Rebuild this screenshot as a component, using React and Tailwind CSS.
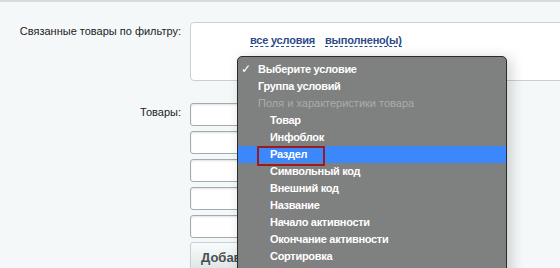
import React from "react";

const items = [
  { t: "Выберите условие", level: 0, check: true },
  { t: "Группа условий", level: 0 },
  { t: "Поля и характеристики товара", level: 0, disabled: true },
  { t: "Товар", level: 1 },
  { t: "Инфоблок", level: 1 },
  { t: "Раздел", level: 1, active: true },
  { t: "Символьный код", level: 1 },
  { t: "Внешний код", level: 1 },
  { t: "Название", level: 1 },
  { t: "Начало активности", level: 1 },
  { t: "Окончание активности", level: 1 },
  { t: "Сортировка", level: 1 },
];

export default function App() {
  return (
    <div
      className="relative h-[268px] w-[560px] overflow-hidden border-t-2 border-[#d3dce1] bg-[#f4f8f9] text-[11px] text-[#222]"
      style={{ fontFamily: '"Liberation Sans", Arial, sans-serif' }}
    >
      {/* Row 1 */}
      <div className="flex pt-[20px]">
        <div className="w-[181px] shrink-0 pt-[2px] text-right text-[11px] leading-[15px]">
          Связанные товары по фильтру:
        </div>
        <div className="ml-[9px] h-[59px] w-[420px] shrink-0 rounded-[4px] border border-[#c8d0d5] bg-white pl-[59px] pt-[9px]">
          <span className="border-b border-dashed border-[#2d4b87] text-[11px] font-bold leading-[15px] tracking-[-0.2px] text-[#2d4b87]">
            все условия
          </span>
          <span className="ml-[10px] border-b border-dashed border-[#2d4b87] text-[11px] font-bold leading-[15px] tracking-[-0.2px] text-[#2d4b87]">
            выполнено(ы)
          </span>
        </div>
      </div>

      {/* Row 2 */}
      <div className="mt-[22px] flex">
        <div className="w-[181px] shrink-0 pt-[2px] text-right text-[11px] leading-[15px]">Товары:</div>
        <div className="ml-[9px] flex flex-col gap-[5px]">
          {[0, 1, 2, 3, 4].map((i) => (
            <div
              key={i}
              className="h-[23px] w-[110px] rounded-[3px] border border-[#a3abb0] bg-white shadow-[inset_0_1px_2px_rgba(0,0,0,0.12)]"
            />
          ))}
          <div className="mt-[-1px] h-[28px] w-[100px] rounded-[3px] border border-[#c9d1d5] bg-gradient-to-b from-[#fafcfc] to-[#dfe6e8] pl-[10px] pt-[5px] text-[13px] font-bold text-[#4a4f52] shadow-[0_1px_1px_rgba(0,0,0,0.15)]">
            Добавить
          </div>
        </div>
      </div>

      {/* Dropdown menu overlay */}
      <div className="absolute left-[237px] top-[54px] h-[240px] w-[270px] rounded-t-[5px] border border-[#2b2b2b] bg-[#7f8080] pt-[4px] shadow-[4px_2px_14px_rgba(0,0,0,0.18)]">
        {items.map((it, i) => (
          <div
            key={i}
            className={
              "relative flex h-[17px] items-center leading-[17px] " +
              (it.active ? "bg-[#3b87fc]" : "")
            }
          >
            <span className="w-[20px] shrink-0 pl-[3px] text-[12px] text-white">
              {it.check ? "✓" : ""}
            </span>
            <span
              className={
                "text-[11px] " +
                (it.level === 1 ? "pl-[12px] " : "") +
                (it.disabled
                  ? "font-normal text-[#acacac]"
                  : "font-bold tracking-[-0.3px] text-white")
              }
            >
              {it.active ? (
                <span className="relative">
                  {it.t}
                  <span className="absolute left-[-13px] top-[-2px] h-[20px] w-[68px] border-2 border-[#9c1b1e]" />
                </span>
              ) : (
                it.t
              )}
            </span>
          </div>
        ))}
      </div>
    </div>
  );
}
